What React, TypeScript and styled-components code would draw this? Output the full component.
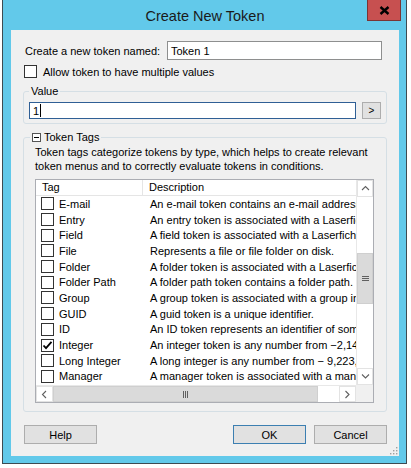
import React from 'react';
import styled, { createGlobalStyle } from 'styled-components';

const UI_FONT = '"Liberation Sans", Arial, sans-serif';

const GlobalStyle = createGlobalStyle`
  html, body { margin: 0; padding: 0; background: #ffffff; }
  body { font-family: ${UI_FONT}; font-size: 11px; line-height: 14px; color: #000000; }
  * { box-sizing: border-box; }
`;

type Tag = { name: string; description: string; checked?: boolean };

const tags: Tag[] = [
  { name: 'E-mail', description: 'An e-mail token contains an e-mail address.' },
  { name: 'Entry', description: 'An entry token is associated with a Laserfiche entry.' },
  { name: 'Field', description: 'A field token is associated with a Laserfiche field.' },
  { name: 'File', description: 'Represents a file or file folder on disk.' },
  { name: 'Folder', description: 'A folder token is associated with a Laserfiche folder.' },
  { name: 'Folder Path', description: 'A folder path token contains a folder path. It can be used.' },
  { name: 'Group', description: 'A group token is associated with a group in Laserfiche.' },
  { name: 'GUID', description: 'A guid token is a unique identifier.' },
  { name: 'ID', description: 'An ID token represents an identifier of some entity.' },
  { name: 'Integer', description: 'An integer token is any number from \u22122,147,483,648 to 2,147,483,647.', checked: true },
  { name: 'Long Integer', description: 'A long integer is any number from \u2212 9,223,372,036,854,775,808.' },
  { name: 'Manager', description: 'A manager token is associated with a manager of a user.' },
];

const Window = styled.div`
  position: relative;
  width: 405px;
  height: 464px;
  margin-left: 2px;
  background: #62c9ea;
  border: 1px solid #3d4b52;
  border-top: none;
  padding: 0 7px 7px 8px;
  display: flex;
  flex-direction: column;
`;

const TitleBar = styled.div`
  height: 30px;
  flex: none;
  display: flex;
  align-items: center;
  justify-content: center;
  padding-top: 1px;
  font-size: 14.5px;
  color: #1a1a1a;
`;

const CloseButton = styled.div`
  position: absolute;
  top: 0;
  right: 5px;
  width: 34px;
  height: 21px;
  background: #c75050;
  border: 1px solid #7a3434;
  border-top: none;
  display: flex;
  align-items: center;
  justify-content: center;
`;

const Content = styled.div`
  position: relative;
  flex: 1;
  min-height: 0;
  background: #f0f0f0;
  padding: 11px 12px 0 12px;
  display: flex;
  flex-direction: column;
`;

const NameRow = styled.div`
  display: flex;
  align-items: center;
  height: 19px;
  padding-left: 2px;
  white-space: nowrap;
`;

const Field = styled.div<{ $width: number; $focused?: boolean }>`
  width: ${p => p.$width}px;
  height: ${p => (p.$focused ? 17 : 19)}px;
  background: #ffffff;
  border: 1px solid ${p => (p.$focused ? '#2f5f95' : '#8e8f8f')};
  display: flex;
  align-items: center;
  padding-left: 3px;
  white-space: nowrap;
`;

const NameField = styled(Field)`
  margin-left: auto;
  margin-right: 5px;
`;

const Caret = styled.span`
  display: inline-block;
  width: 1px;
  height: 13px;
  margin-left: 1px;
  background: #000000;
`;

const CheckRow = styled.label`
  display: flex;
  align-items: center;
  gap: 6px;
  margin-top: 5px;
  padding-left: 1px;
  height: 13px;
  white-space: nowrap;
`;

const Box = styled.span`
  flex: none;
  width: 13px;
  height: 13px;
  background: #ffffff;
  border: 1px solid #333333;
  display: flex;
  align-items: center;
  justify-content: center;
`;

const Group = styled.fieldset<{ $padLeft: number; $padRight: number; $padBottom: number }>`
  margin: 0;
  border: 1px solid #d5dfe5;
  border-radius: 3px;
  padding: 0 ${p => p.$padRight}px ${p => p.$padBottom}px ${p => p.$padLeft}px;
  min-width: 0;
`;

const ValueGroup = styled(Group)`
  margin-top: 6px;
`;

const TagsGroup = styled(Group)`
  margin-top: 6px;
`;

const Legend = styled.legend`
  padding: 0 2px;
  line-height: 14px;
  display: flex;
  align-items: center;
  gap: 3px;
`;

const ValueRow = styled.div`
  display: flex;
  align-items: center;
  justify-content: space-between;
  margin-top: 4px;
`;

const SmallButton = styled.div`
  width: 19px;
  height: 17px;
  background: #e1e1e1;
  border: 1px solid #adadad;
  display: flex;
  align-items: center;
  justify-content: center;
  font-size: 10px;
`;

const TagsBody = styled.div`
  padding-left: 5px;
`;

const Intro = styled.p`
  margin: 1px 0 0;
  line-height: 14px;
`;

const ListBox = styled.div`
  margin-top: 6px;
  height: 224px;
  background: #ffffff;
  border: 1px solid #abadb3;
  display: grid;
  grid-template-columns: minmax(0, 1fr) 17px;
  grid-template-rows: minmax(0, 1fr) 17px;
`;

const ListView = styled.div`
  overflow: hidden;
  min-width: 0;
  min-height: 0;
`;

const HeaderRow = styled.div`
  display: flex;
  height: 16px;
  border-bottom: 1px solid #e5e5e5;
  white-space: nowrap;
`;

const HeaderCell = styled.div<{ $width?: number }>`
  ${p => (p.$width ? `width: ${p.$width}px; flex: none; border-right: 1px solid #e5e5e5;` : 'flex: 1;')}
  padding-left: 6px;
  line-height: 15px;
`;

const Row = styled.div`
  display: flex;
  align-items: center;
  height: 15.7px;
  white-space: nowrap;
`;

const TagCell = styled.div`
  width: 107px;
  flex: none;
  display: flex;
  align-items: center;
  gap: 5px;
  padding-left: 5px;
`;

const DescCell = styled.div`
  padding-left: 7px;
`;

const VScroll = styled.div`
  display: flex;
  flex-direction: column;
  min-height: 0;
  background: #ffffff;
  border-left: 1px solid #e8e8e8;
`;

const HScroll = styled.div`
  display: flex;
  background: #ffffff;
  border-top: 1px solid #e8e8e8;
`;

const Arrow = styled.div<{ $vertical?: boolean }>`
  flex: none;
  ${p => (p.$vertical ? 'height: 17px;' : 'width: 17px;')}
  display: flex;
  align-items: center;
  justify-content: center;
  background: #ffffff;
  border: 1px solid #e3e3e3;
`;

const Track = styled.div<{ $size?: number }>`
  ${p => (p.$size ? `flex: none; height: ${p.$size}px;` : 'flex: 1;')}
  background: #ffffff;
`;

const Thumb = styled.div<{ $size: number; $vertical?: boolean }>`
  flex: none;
  ${p => (p.$vertical ? `height: ${p.$size}px;` : `width: ${p.$size}px;`)}
  background: #dadada;
  border: 1px solid #cfcfcf;
  display: flex;
  align-items: center;
  justify-content: center;
`;

const Corner = styled.div`
  background: #f0f0f0;
`;

const ButtonRow = styled.div`
  display: flex;
  align-items: center;
  gap: 8px;
  margin-top: 13px;
  padding-left: 1px;
`;

const Button = styled.div<{ $default?: boolean }>`
  width: 73px;
  height: 19px;
  background: #e1e1e1;
  border: 1px solid ${p => (p.$default ? '#3c7fb1' : '#adadad')};
  display: flex;
  align-items: center;
  justify-content: center;
`;

const Spacer = styled.div`
  flex: 1;
`;

const Grip = styled.svg`
  position: absolute;
  right: 1px;
  bottom: 1px;
`;

const Chevron = ({ dir }: { dir: 'up' | 'down' | 'left' | 'right' }) => {
  const d = {
    up: 'M1 5 L4.5 1.5 L8 5',
    down: 'M1 1.5 L4.5 5 L8 1.5',
    left: 'M5 1 L1.5 4.5 L5 8',
    right: 'M1.5 1 L5 4.5 L1.5 8',
  }[dir];
  const vertical = dir === 'up' || dir === 'down';
  return (
    <svg width={vertical ? 9 : 7} height={vertical ? 7 : 9} viewBox={vertical ? '0 0 9 7' : '0 0 7 9'}>
      <path d={d} fill="none" stroke="#606060" strokeWidth="1.1" />
    </svg>
  );
};

const Check = () => (
  <svg width="11" height="11" viewBox="0 0 11 11">
    <path d="M1.5 5.5 L4 8.2 L9.5 1.8" fill="none" stroke="#000" strokeWidth="1.8" />
  </svg>
);

export default function App() {
  return (
    <>
      <GlobalStyle />
      <Window>
        <TitleBar>Create New Token</TitleBar>
        <CloseButton>
          <svg width="11" height="9" viewBox="0 0 11 9">
            <path d="M1.5 1 L9.5 8 M9.5 1 L1.5 8" stroke="#000" strokeWidth="2.4" />
          </svg>
        </CloseButton>
        <Content>
          <NameRow>
            <span>Create a new token named:</span>
            <NameField $width={215}>Token 1</NameField>
          </NameRow>
          <CheckRow>
            <Box />
            <span>Allow token to have multiple values</span>
          </CheckRow>
          <ValueGroup $padLeft={5} $padRight={5} $padBottom={4}>
            <Legend>Value</Legend>
            <ValueRow>
              <Field $width={327} $focused>
                1<Caret />
              </Field>
              <SmallButton>&gt;</SmallButton>
            </ValueRow>
          </ValueGroup>
          <TagsGroup $padLeft={6} $padRight={12} $padBottom={8}>
            <Legend>
              <svg width="9" height="9" viewBox="0 0 9 9">
                <rect x="0.5" y="0.5" width="8" height="8" fill="#fff" stroke="#555" />
                <path d="M2 4.5 H7" stroke="#000" />
              </svg>
              <span>Token Tags</span>
            </Legend>
            <TagsBody>
              <Intro>
                Token tags categorize tokens by type, which helps to create relevant token menus and to correctly
                evaluate tokens in conditions.
              </Intro>
              <ListBox>
                <ListView>
                  <HeaderRow>
                    <HeaderCell $width={107}>Tag</HeaderCell>
                    <HeaderCell>Description</HeaderCell>
                  </HeaderRow>
                  {tags.map(t => (
                    <Row key={t.name}>
                      <TagCell>
                        <Box>{t.checked && <Check />}</Box>
                        <span>{t.name}</span>
                      </TagCell>
                      <DescCell>{t.description}</DescCell>
                    </Row>
                  ))}
                </ListView>
                <VScroll>
                  <Arrow $vertical>
                    <Chevron dir="up" />
                  </Arrow>
                  <Track $size={56} />
                  <Thumb $vertical $size={51}>
                    <svg width="7" height="6" viewBox="0 0 7 6">
                      <path d="M0 0.5 H7 M0 2.5 H7 M0 4.5 H7" stroke="#606060" />
                    </svg>
                  </Thumb>
                  <Track />
                  <Arrow $vertical>
                    <Chevron dir="down" />
                  </Arrow>
                </VScroll>
                <HScroll>
                  <Arrow>
                    <Chevron dir="left" />
                  </Arrow>
                  <Thumb $size={265}>
                    <svg width="6" height="7" viewBox="0 0 6 7">
                      <path d="M0.5 0 V7 M2.5 0 V7 M4.5 0 V7" stroke="#606060" />
                    </svg>
                  </Thumb>
                  <Track />
                  <Arrow>
                    <Chevron dir="right" />
                  </Arrow>
                </HScroll>
                <Corner />
              </ListBox>
            </TagsBody>
          </TagsGroup>
          <ButtonRow>
            <Button>Help</Button>
            <Spacer />
            <Button $default>OK</Button>
            <Button>Cancel</Button>
          </ButtonRow>
          <Grip width="8" height="8" viewBox="0 0 8 8">
            <rect x="6" y="0" width="1.4" height="1.4" fill="#a0a0a0" />
            <rect x="3" y="3" width="1.4" height="1.4" fill="#a0a0a0" />
            <rect x="6" y="3" width="1.4" height="1.4" fill="#a0a0a0" />
            <rect x="0" y="6" width="1.4" height="1.4" fill="#a0a0a0" />
            <rect x="3" y="6" width="1.4" height="1.4" fill="#a0a0a0" />
            <rect x="6" y="6" width="1.4" height="1.4" fill="#a0a0a0" />
          </Grip>
        </Content>
      </Window>
    </>
  );
}
